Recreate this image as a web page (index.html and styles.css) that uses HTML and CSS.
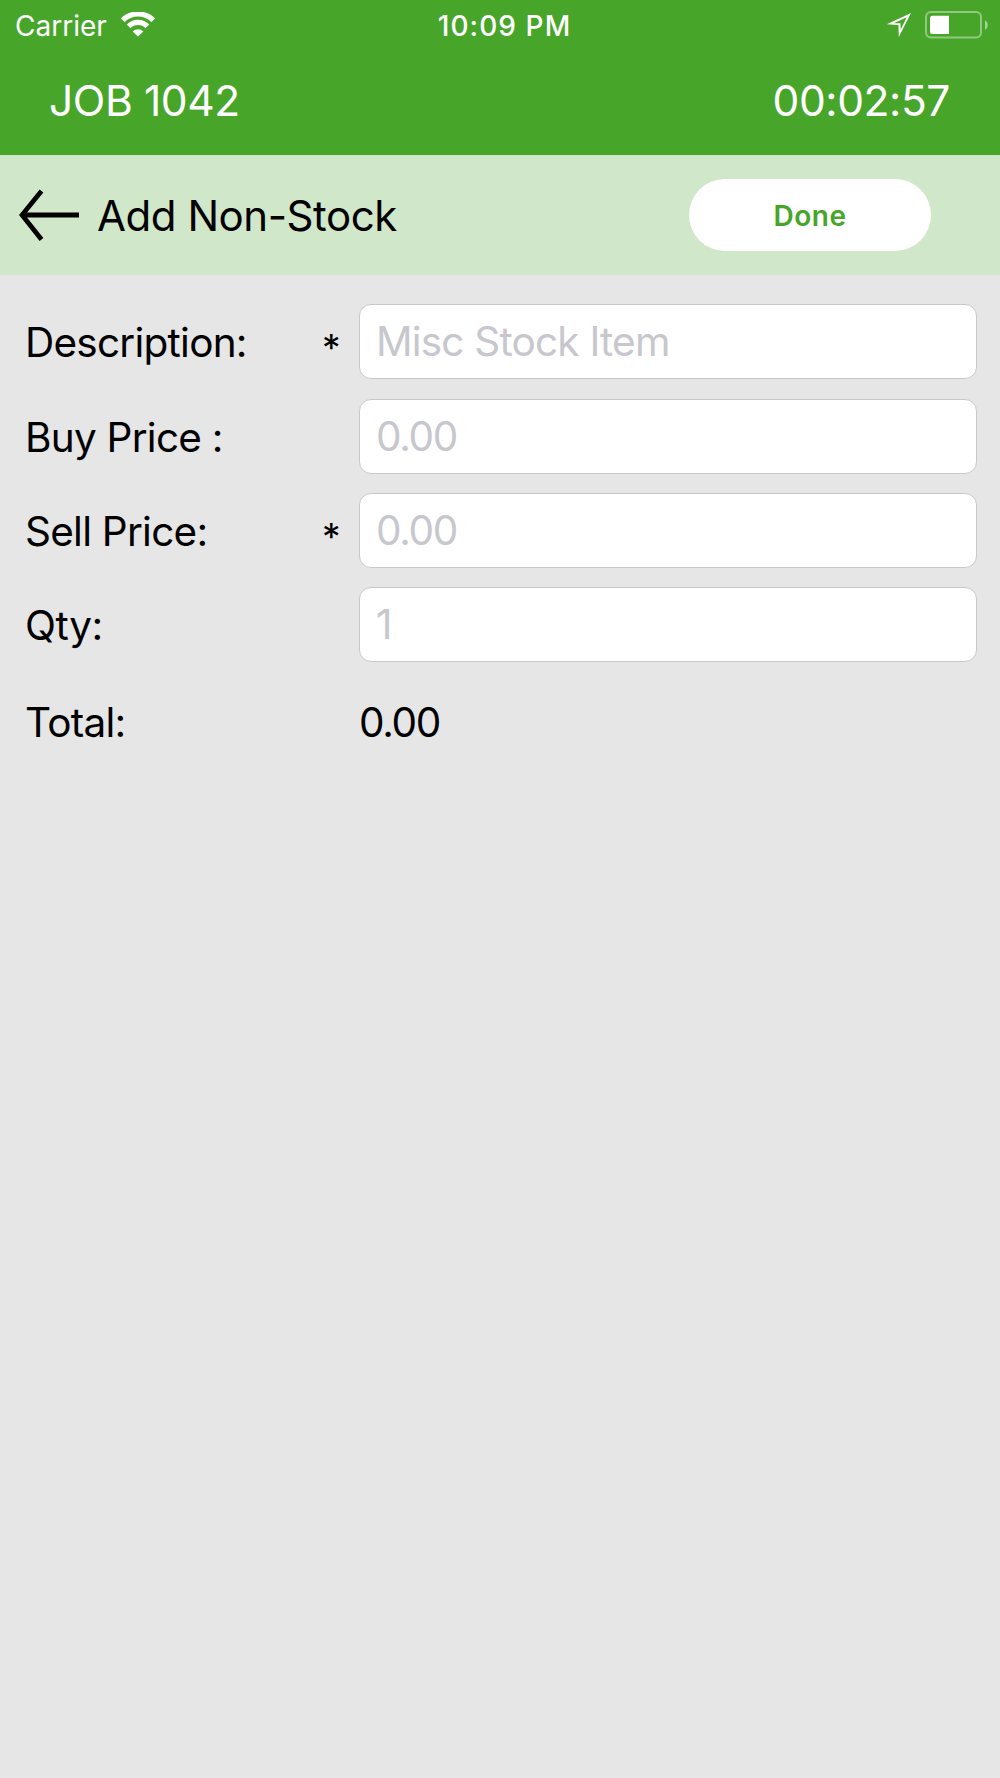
FILE: index.html
```html
<!DOCTYPE html>
<html>
  <head>
    <meta charset="utf-8" />
    <meta name="viewport" content="width=device-width, initial-scale=1" />
    <title>Add Non-Stock</title>
    <link rel="stylesheet" href="styles.css">
  </head>

  <body>
    <div class="header">
      <div class="status-bar">
        <div class="status-left">
          <span class="carrier">Carrier</span>
          <svg class="wifi" width="34" height="25" viewBox="0 0 34 25">
            <g fill="none" stroke="#fff" stroke-width="5.2">
              <path d="M1.8 8.2 A 21.6 21.6 0 0 1 32.2 8.2" />
              <path d="M7.6 14.4 A 13.2 13.2 0 0 1 26.4 14.4" />
            </g>
            <path d="M17 24.6 L11.7 19.5 A 7.6 7.6 0 0 1 22.3 19.5 Z" fill="#fff" />
          </svg>
        </div>
        <span class="clock">10:09 PM</span>
        <div class="status-right">
          <svg class="location" width="26" height="26" viewBox="0 0 26 26">
            <path fill="#fff" fill-rule="evenodd" d="M25 0 L0.8 11.3 L12.4 12 L12.8 24 Z M20.8 4.2 L7.8 10.2 H14.4 L14.7 16.4 Z" />
          </svg>
          <svg class="battery" width="64" height="28" viewBox="0 0 64 28">
            <rect x="1" y="1" width="55" height="25.6" rx="5" fill="none" stroke="#fff" stroke-opacity="0.4" stroke-width="2" />
            <path d="M24 4.7 H7.5 A 2.5 2.5 0 0 0 5 7.2 V20.5 A 2.5 2.5 0 0 0 7.5 23 H24 Z" fill="#fff" />
            <path d="M60 9.2 A 5.6 5.6 0 0 1 60 18.8 Z" fill="#fff" fill-opacity="0.5" />
          </svg>
        </div>
      </div>
      <div class="job-bar">
        <span class="job">JOB 1042</span>
        <span class="timer">00:02:57</span>
      </div>
    </div>

    <div class="title-bar">
      <svg class="back" width="62" height="54" viewBox="0 0 62 54">
        <path d="M60 27 H3 M22.5 3 L3 27 L22.5 51.5" fill="none" stroke="#000" stroke-width="4.8" />
      </svg>
      <h1>Add Non-Stock</h1>
      <button type="button" class="done">Done</button>
    </div>

    <form class="stock-form">
      <div class="row">
        <label class="description" for="description">Description:</label>
        <span class="required">*</span>
        <input type="text" id="description" placeholder="Misc Stock Item" />
      </div>
      <div class="row">
        <label class="buy" for="buy">Buy Price :</label>
        <input type="text" id="buy" class="price" placeholder="0.00" />
      </div>
      <div class="row">
        <label class="sell" for="sell">Sell Price:</label>
        <span class="required">*</span>
        <input type="text" id="sell" class="price" placeholder="0.00" />
      </div>
      <div class="row">
        <label class="qty" for="qty">Qty:</label>
        <input type="text" id="qty" placeholder="1" />
      </div>
      <div class="row total-row">
        <label class="total">Total:</label>
        <span class="total-value">0.00</span>
      </div>
    </form>
  </body>
</html>
```

FILE: styles.css
```css
* {
  box-sizing: border-box;
}

body {
  margin: 0;
  min-height: 1778px;
  background-color: #e6e6e6;
  font-family: Inter, "Liberation Sans", sans-serif;
  color: #000;
}

svg {
  display: block;
}

.header {
  height: 155px;
  background-color: #47a62a;
  color: #fff;
}

.status-bar {
  display: grid;
  grid-template-columns: 1fr auto 1fr;
  height: 52px;
  padding: 0 11px 0 15px;
  font-size: 28px;
  line-height: 52px;
}

.status-left {
  display: flex;
}

.carrier {
  width: 106px;
}

.wifi {
  margin-top: 12px;
}

.clock {
  font-weight: 500;
  letter-spacing: 1.1px;
  padding-left: 5px;
}

.status-right {
  display: flex;
  justify-content: flex-end;
}

.location {
  margin: 13px 13px 0 0;
}

.battery {
  margin-top: 11px;
}

.job-bar {
  display: flex;
  justify-content: space-between;
  height: 98px;
  padding: 0 50px 0 49px;
  font-size: 42.5px;
  letter-spacing: -0.4px;
  line-height: 98px;
}

.title-bar {
  display: flex;
  align-items: center;
  height: 120px;
  padding: 0 69px 0 19px;
  background-color: #d0e7ca;
}

.title-bar h1 {
  flex: 1;
  margin: 0 0 0 16px;
  font-size: 42px;
  font-weight: 400;
  letter-spacing: -0.45px;
}

.done {
  width: 242px;
  height: 72px;
  padding-top: 2px;
  border: none;
  border-radius: 36px;
  background-color: #fff;
  color: #47a62a;
  font-family: inherit;
  font-size: 28px;
  font-weight: 600;
  letter-spacing: 0.5px;
}

.stock-form {
  display: flex;
  flex-direction: column;
  gap: 19px;
  padding: 29.3px 23px 0 25px;
}

.row {
  display: flex;
  align-items: center;
  height: 75.2px;
  font-size: 40.5px;
  letter-spacing: -0.75px;
}

.row label {
  flex: 0 0 auto;
  width: 297px;
  padding-top: 2px;
}

.row .qty {
  letter-spacing: -0.4px;
}

.required {
  width: 37px;
  padding-top: 12px;
  font-size: 37px;
}

.row input {
  width: 618px;
  height: 75px;
  margin-left: auto;
  padding: 0 16px;
  border: 1px solid #c8c8c8;
  border-radius: 12px;
  background-color: #fff;
  font-family: inherit;
  font-size: 40.5px;
  letter-spacing: -0.8px;
}

.row .price,
.total-value {
  letter-spacing: -1.3px;
}

.row input::placeholder {
  color: #c7c7cd;
}

.total-row {
  margin-top: 3px;
}

.total-value {
  margin-left: 37px;
  padding-top: 2px;
}
```
